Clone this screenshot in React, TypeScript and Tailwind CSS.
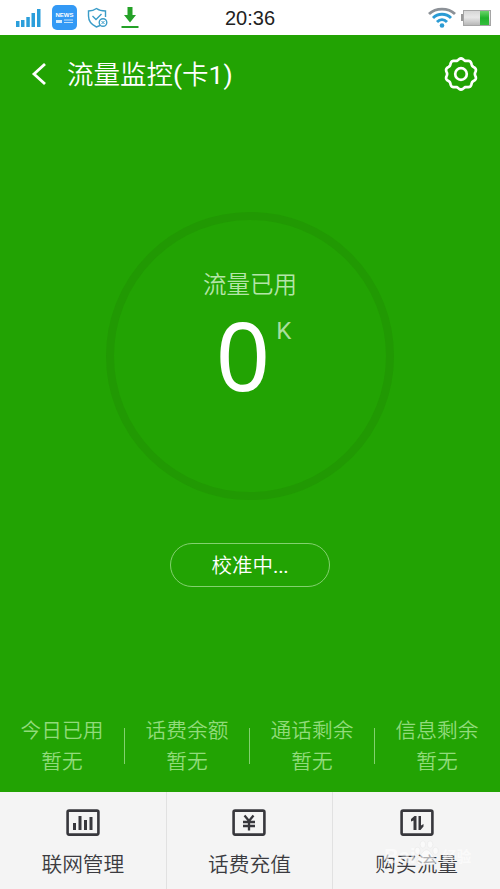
const stats = [
  { label: "今日已用", value: "暂无" },
  { label: "话费余额", value: "暂无" },
  { label: "通话剩余", value: "暂无" },
  { label: "信息剩余", value: "暂无" },
];

// wavy outline of the settings icon
const gearPath = () => {
  const points: string[] = [];
  for (let i = 0; i < 120; i++) {
    const a = (i / 120) * Math.PI * 2;
    const r = 14.7 + 0.85 * Math.cos(10 * a);
    points.push(`${(18 + r * Math.sin(a)).toFixed(2)} ${(18 - r * Math.cos(a)).toFixed(2)}`);
  }
  return `M${points.join("L")}Z`;
};

const StatusBar = () => {
  return (
    <div className="h-[35px] bg-white grid grid-cols-3 items-center">
      <div className="flex items-center pl-[15px] h-full">
        <svg width="26" height="20" viewBox="0 0 26 20" fill="#2b9edb">
          <rect x="1" y="13" width="3.500" height="6" />
          <rect x="6" y="12" width="3.500" height="7" />
          <rect x="11.300" y="9" width="3.500" height="10" />
          <rect x="16.500" y="5" width="3.500" height="14" />
          <rect x="22" y="1" width="3.500" height="18" />
        </svg>
        <div className="ml-[11px] w-[25px] h-[25px] rounded-[5px] bg-[#3399f5] text-white flex flex-col items-center justify-center">
          <span className="font-['Liberation_Sans'] font-bold text-[6px] leading-[7px]">NEWS</span>
          <svg width="17" height="5" viewBox="0 0 17 5" fill="#fff">
            <rect x="0" y="1" width="6" height="3" opacity=".8" />
            <rect x="8" y="0.5" width="9" height="1" opacity=".7" />
            <rect x="8" y="3" width="9" height="1" opacity=".7" />
          </svg>
        </div>
        <svg className="ml-[9px] shrink-0" width="22" height="22" viewBox="0 0 22 22" fill="none" stroke="#3a9cc8" strokeWidth="1.400">
          <path d="M14 18.500L10.500 20C5 17.500 2.500 14 2.500 9V4C6 4 8.500 3 10.500 1.500C12.500 3 15 4 19.500 4V10" />
          <path d="M6.500 9L10 12.500L15.500 7" />
          <circle cx="17" cy="15.500" r="3.800" />
          <path d="M15.500 14L18.500 17M18.500 14L15.500 17" strokeWidth="1" />
        </svg>
        <svg className="ml-[12px] shrink-0" width="20" height="24" viewBox="0 0 20 24" fill="#24a127">
          <path d="M7.500 1H12.500V9H16L10 16.500L4 9H7.500Z" />
          <rect x="1.500" y="20" width="17" height="2" />
        </svg>
      </div>
      <div className="pt-[2px] text-center text-[20px] leading-[33px] text-[#222] font-['Liberation_Sans']">20:36</div>
      <div className="flex items-center justify-end pr-[8px]">
        <svg width="28" height="22" viewBox="0 0 28 22" fill="none" strokeWidth="2.900">
          <path d="M1 7C8 0.500 20 0.500 27 7" stroke="#8c9197" />
          <path d="M5 11C10 6 18 6 23 11" stroke="#2b9bd4" />
          <path d="M9 15C12 12 16 12 19 15" stroke="#2b9bd4" />
          <circle cx="14" cy="18.500" r="2.300" fill="#2b9bd4" stroke="none" />
        </svg>
        <svg className="ml-[4px]" width="32" height="18" viewBox="0 0 32 18">
          <defs>
            <linearGradient id="shell" x1="0" y1="0" x2="0" y2="1">
              <stop offset="0" stopColor="#d5d5d5" />
              <stop offset=".45" stopColor="#e8e8e8" />
              <stop offset="1" stopColor="#b5b5b5" />
            </linearGradient>
            <linearGradient id="charge" x1="0" y1="0" x2="0" y2="1">
              <stop offset="0" stopColor="#6ad36a" />
              <stop offset=".5" stopColor="#20b32a" />
              <stop offset="1" stopColor="#35bd3d" />
            </linearGradient>
          </defs>
          <rect x="1" y="5" width="3" height="7" fill="#999" />
          <rect x="3.500" y="1.500" width="27" height="15" fill="url(#shell)" stroke="#a5a5a5" />
          <rect x="20" y="2" width="9" height="14" fill="url(#charge)" />
        </svg>
      </div>
    </div>
  );
};

const Header = () => {
  return (
    <header className="h-[77px] flex items-center pl-[31px] pr-[21px] text-white">
      <svg width="16" height="24" viewBox="0 0 16 24" fill="none" stroke="#fff" strokeWidth="2.800">
        <path d="M14 2L3 12L14 22" />
      </svg>
      <h1 className="ml-[20px] pt-px text-[26.5px] leading-[36px] font-[350]">
        流量监控<span className="font-['Roboto'] font-normal">(</span>卡<span className="font-['Roboto'] font-normal">1)</span>
      </h1>
      <svg className="ml-auto" width="36" height="36" viewBox="0 0 36 36" fill="none" stroke="#fff" strokeWidth="2.700">
        <path d={gearPath()} />
        <circle cx="18" cy="18" r="5.800" />
      </svg>
    </header>
  );
};

const Watermark = () => {
  return (
    <div className="absolute left-[51px] top-[43px] flex items-center text-white opacity-60 pointer-events-none">
      <span className="pt-[6px] w-[29px] font-['Liberation_Sans'] font-bold text-[20px] leading-[30px]">Bai</span>
      <svg width="27" height="29" viewBox="0 0 28 32" fill="#fff" stroke="#dcdcdc" strokeWidth=".5">
        <ellipse cx="4" cy="13" rx="3" ry="4" />
        <ellipse cx="10" cy="6" rx="3" ry="4" />
        <ellipse cx="18" cy="6" rx="3" ry="4" />
        <ellipse cx="24" cy="13" rx="3" ry="4" />
        <path d="M14 12C18 12 20 18 24 22C27 28 20 30 14 28C8 30 1 28 4 22C8 18 10 12 14 12Z" />
      </svg>
      <span className="ml-[2px] pt-[5px] text-[14.5px] leading-[30px] font-bold">经验</span>
    </div>
  );
};

export default function App() {
  return (
    <div className="w-[500px] h-[889px] flex flex-col overflow-hidden bg-[#22a303] font-['Noto_Sans_CJK_SC',sans-serif]">
      <StatusBar />
      <Header />

      <main className="flex-1 flex flex-col items-center pt-[100px]">
        {/* Usage ring */}
        <div className="w-[288px] h-[288px] rounded-full border-[8px] border-[#219903] flex flex-col items-center pt-[46px]">
          <p className="text-[23.5px] leading-[34px] font-[350] text-[#b4e5a8]">流量已用</p>
          <div className="relative mt-[5px] mr-[14px]">
            <span className="block text-[95px] leading-[98px] text-white font-['Noto_Sans']">0</span>
            <span className="absolute left-full top-[12px] ml-[6px] text-[24px] leading-[28px] text-[#a9df9c] font-['Roboto']">K</span>
          </div>
        </div>

        <button className="mt-[43px] w-[160px] h-[44px] rounded-full border border-[#83d16f] text-white text-[20.5px] font-[350]">
          校准中<span className="font-['Roboto'] font-normal tracking-[-0.2px]">...</span>
        </button>

        <div className="mt-auto mb-[16px] w-full grid grid-cols-4">
          {stats.map((stat, index) => (
            <div key={stat.label} className="relative pr-[1px] text-center text-[20.7px] leading-[31px] font-[350] text-[#91db7b]">
              <p>{stat.label}</p>
              <p>{stat.value}</p>
              {index < 3 && <div className="absolute right-0 top-[14px] w-px h-[36px] bg-[#83d16f]" />}
            </div>
          ))}
        </div>
      </main>

      {/* Bottom actions */}
      <nav className="h-[97px] shrink-0 bg-[#f4f4f4] grid grid-cols-3 text-[#3b3b40] text-[20.7px]">
        <a href="#" className="flex flex-col items-center pt-[17px] border-r border-[#e1e1e1]">
          <svg width="34" height="28" viewBox="0 0 34 28" fill="none" stroke="#37373c" strokeWidth="2.600">
            <rect x="1.600" y="1.600" width="30.800" height="24" rx="1.500" />
            <path d="M8.500 14V21M14 7V21M19.500 11V21M25 8V21" strokeWidth="3" />
          </svg>
          <span className="mt-[11px] leading-[30px] font-[350]">联网管理</span>
        </a>
        <a href="#" className="flex flex-col items-center pt-[17px] border-r border-[#e1e1e1]">
          <svg width="34" height="28" viewBox="0 0 34 28" fill="none" stroke="#37373c" strokeWidth="2.600">
            <rect x="1.600" y="1.600" width="30.800" height="24" rx="1.500" />
            <path d="M12.500 6.500L17 12L21.500 6.500M17 12V21.500M11 13H23M11 17H23" strokeWidth="2.300" />
          </svg>
          <span className="mt-[11px] leading-[30px] font-[350]">话费充值</span>
        </a>
        <a href="#" className="relative flex flex-col items-center pt-[17px]">
          <svg width="34" height="28" viewBox="0 0 34 28" fill="none" stroke="#37373c" strokeWidth="2.600">
            <rect x="1.600" y="1.600" width="30.800" height="24" rx="1.500" />
            <path d="M11 12.500V10L14.500 7H16.500V21H13.500V11.500ZM18.500 7H21V16.500L23.500 15V17.500L20.500 21H18.500Z" fill="#37373c" stroke="none" />
          </svg>
          <span className="mt-[11px] leading-[30px] font-[350]">购买流量</span>
          <Watermark />
        </a>
      </nav>
    </div>
  );
}
